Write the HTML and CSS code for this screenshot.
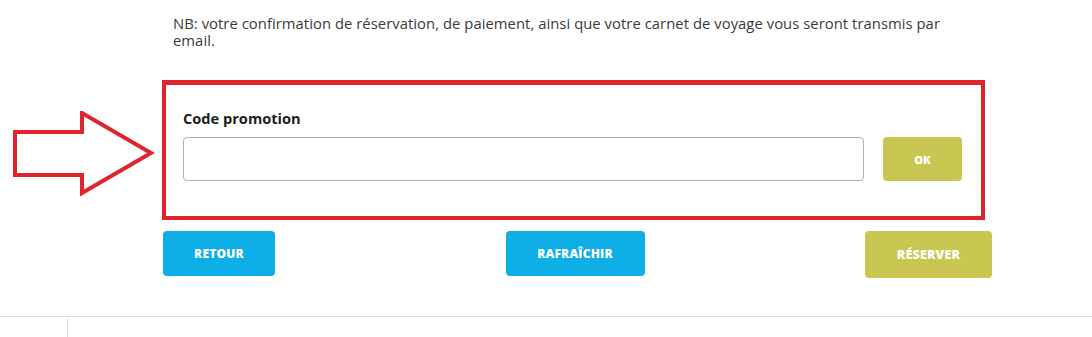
FILE: index.html
```html
<!DOCTYPE html>
<html lang="fr">
<head>
<meta charset="utf-8">
<title>Code promotion</title>
<link rel="stylesheet" href="styles.css">
</head>
<body>
<div class="page">
  <svg class="arrow" width="150" height="92" viewBox="0 0 150 92" aria-hidden="true">
    <polygon points="2,21 69,21 69,2 138,42 69,82 69,64 2,64" fill="none" stroke="#e0242c" stroke-width="4" stroke-linejoin="miter"/>
  </svg>
  <main class="main">
    <p class="note">NB: votre confirmation de réservation, de paiement, ainsi que votre carnet de voyage vous seront transmis par email.</p>
    <section class="promo">
      <label class="promo-label" for="promo">Code promotion</label>
      <div class="promo-row">
        <input class="promo-input" id="promo" type="text">
        <button class="btn btn-olive btn-ok" type="button">OK</button>
      </div>
    </section>
    <div class="actions">
      <button class="btn btn-blue btn-back" type="button">RETOUR</button>
      <button class="btn btn-blue btn-refresh" type="button">RAFRAÎCHIR</button>
      <button class="btn btn-olive btn-book" type="button">RÉSERVER</button>
    </div>
  </main>
  <footer class="footer">
    <span class="tick"></span>
  </footer>
</div>
</body>
</html>
```
FILE: styles.css
```css
* { box-sizing: border-box; }
html, body { margin: 0; padding: 0; background: #fff; }
body {
  font-family: "Open Sans", "Liberation Sans", sans-serif;
  color: #333;
  width: 1092px;
  height: 337px;
  overflow: hidden;
}
.page { position: relative; height: 337px; }
.arrow {
  position: absolute;
  left: 13px;
  top: 111px;
}
.main {
  margin-left: 163px;
  width: 829px;
  padding-top: 15px;
}
.note {
  margin: 0;
  padding-left: 10px;
  width: 800px;
  font-size: 14.8px;
  line-height: 17px;
  color: #3a3a3a;
  letter-spacing: 0.05px;
}
.promo {
  margin-top: 31px;
  margin-left: -1px;
  width: 823px;
  border: 4px solid #e0242c;
  border-top-width: 5px;
  padding: 24px 19px 35px 17px;
}
.promo-label {
  display: block;
  font-weight: 700;
  font-size: 14.6px;
  line-height: 18px;
  color: #1d1d1d;
  margin-bottom: 10px;
}
.promo-row {
  display: flex;
  align-items: stretch;
  gap: 19px;
}
.promo-input {
  flex: 1;
  height: 44px;
  border: 1px solid #a6b4c2;
  border-radius: 4px;
  background: #fff;
  margin: 0;
  font: inherit;
}
.btn {
  border: 0;
  border-radius: 4px;
  color: #fff;
  font-family: "Open Sans", "Liberation Sans", sans-serif;
  font-weight: 800;
  font-size: 12px;
  letter-spacing: 0.2px;
  padding: 0;
  margin: 0;
}
.btn-olive { background: #c9c751; }
.btn-blue { background: #0eaee6; }
.btn-ok { width: 79px; height: 44px; font-size: 11px; }
.actions {
  margin-top: 11px;
  display: flex;
  justify-content: space-between;
  align-items: flex-start;
}
.btn-back { width: 112px; height: 45px; }
.btn-refresh { width: 139px; height: 45px; margin-left: 10px; }
.btn-book { width: 127px; height: 47px; font-size: 12.5px; }
.footer {
  position: absolute;
  left: 0;
  right: 0;
  top: 316px;
  height: 21px;
  border-top: 1px solid #dcdcdc;
}
.tick {
  display: block;
  margin-left: 67px;
  margin-top: 2px;
  width: 1px;
  height: 19px;
  background: #d8d8d8;
}
```
